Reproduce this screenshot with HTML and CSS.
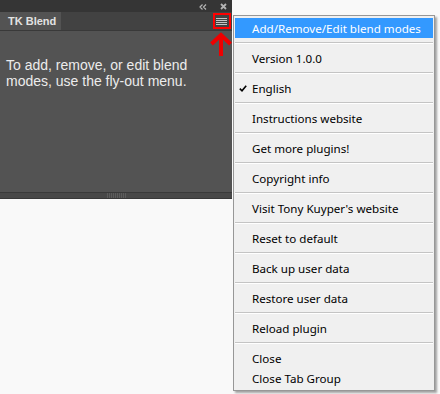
FILE: index.html
```html
<!DOCTYPE html>
<html lang="en">
  <head>
    <meta charset="UTF-8" />
    <title>TK Blend</title>
    <link rel="stylesheet" href="styles.css">
  </head>
  <body>
    <div class="panel">
      <div class="titlebar">
        <svg class="collapse" width="8" height="6" viewBox="0 0 8 6">
          <path d="M3.5 0.5 L1 3 L3.5 5.5 M7 0.5 L4.5 3 L7 5.5" fill="none" stroke="#b4b4b4" stroke-width="1.2" />
        </svg>
        <svg class="close" width="7" height="7" viewBox="0 0 7 7">
          <path d="M1 1 L6 6 M6 1 L1 6" stroke="#b4b4b4" stroke-width="1.8" />
        </svg>
      </div>

      <div class="tabrow">
        <div class="tab">TK Blend</div>
        <div class="menu-btn">
          <svg width="13" height="11" viewBox="0 0 13 11">
            <path d="M1 2.5 H12 M1 4.5 H12 M1 6.5 H12 M1 8.5 H12" stroke="#c4c4c4" stroke-width="1" />
          </svg>
        </div>
      </div>

      <div class="content">
        <p>To add, remove, or edit blend modes, use the fly-out menu.</p>
      </div>

      <div class="footer">
        <div class="grip"></div>
      </div>
    </div>

    <!-- red pointer drawn over the screenshot -->
    <svg class="pointer" width="24" height="24" viewBox="0 0 24 24">
      <path d="M2.5 12 L12 3 L21.5 12" fill="none" stroke="#ee0000" stroke-width="4" />
      <path d="M12 4 V24" stroke="#ee0000" stroke-width="4" />
    </svg>

    <ul class="flyout">
      <li class="item active">Add/Remove/Edit blend modes</li>
      <li class="sep"></li>
      <li class="item">Version 1.0.0</li>
      <li class="sep"></li>
      <li class="item checked">
        <svg class="check" width="8" height="7" viewBox="0 0 8 7">
          <path d="M0.8 3.6 L3 5.8 L7.2 0.8" fill="none" stroke="#000" stroke-width="1.6" />
        </svg>
        English
      </li>
      <li class="sep"></li>
      <li class="item">Instructions website</li>
      <li class="sep"></li>
      <li class="item">Get more plugins!</li>
      <li class="sep"></li>
      <li class="item">Copyright info</li>
      <li class="sep"></li>
      <li class="item">Visit Tony Kuyper's website</li>
      <li class="sep"></li>
      <li class="item">Reset to default</li>
      <li class="sep"></li>
      <li class="item">Back up user data</li>
      <li class="sep"></li>
      <li class="item">Restore user data</li>
      <li class="sep"></li>
      <li class="item">Reload plugin</li>
      <li class="sep"></li>
      <li class="item">Close</li>
      <li class="item">Close Tab Group</li>
    </ul>
  </body>
</html>
```

FILE: styles.css
```css
body {
  margin: 0;
  background-color: #f9f9f9;
  font-family: "Liberation Sans", Arial, sans-serif;
}
.panel {
  width: 232px;
  background-color: #535353;
}
.titlebar {
  height: 12px;
  background-color: #353535;
  display: flex;
  align-items: center;
  justify-content: flex-end;
  gap: 13px;
  padding-right: 5px;
}
.collapse {
  margin-top: 2px;
}
.close {
  margin-top: 1px;
}
.tabrow {
  height: 18px;
  background-color: #424242;
  border-bottom: 1px solid #393939;
  display: flex;
  align-items: flex-start;
}
.tab {
  height: 18px;
  padding: 0 5px 0 8px;
  background-color: #535353;
  color: #e2e2e2;
  font-size: 11px;
  font-weight: bold;
  line-height: 19px;
  white-space: nowrap;
}
.menu-btn {
  margin-left: auto;
  margin-right: 1px;
  margin-top: 1px;
  width: 14px;
  height: 12px;
  border: 2px solid #ff0000;
  display: flex;
  align-items: center;
}
.content {
  height: 135px;
  padding: 26px 6px 0 6px;
}
.content p {
  margin: 0;
  color: #ececec;
  font-size: 14px;
  line-height: 16px;
}
.footer {
  height: 5px;
  background-color: #484848;
  border-top: 1px solid #3a3a3a;
  border-bottom: 1px solid #383838;
  display: flex;
  justify-content: center;
}
.grip {
  width: 20px;
  height: 5px;
  margin-left: 2px;
  background: repeating-linear-gradient(90deg, #5c5c5c 0 1px, transparent 1px 2px);
}
.pointer {
  position: absolute;
  left: 209px;
  top: 32px;
}
.flyout {
  position: absolute;
  left: 233px;
  top: 15px;
  width: 198px;
  margin: 0;
  padding: 2px 1px;
  list-style: none;
  background-color: #f0f0f0;
  border: 1px solid #979797;
  box-shadow: 2px 2px 2px rgba(0, 0, 0, 0.35);
  font-family: "Segoe UI", "Noto Sans", sans-serif;
  font-size: 11.6px;
  color: #000;
}
.item {
  position: relative;
  height: 20px;
  line-height: 22px;
  padding-left: 17px;
  white-space: nowrap;
}
.item.active {
  background-color: #3399ff;
  color: #fff;
}
.check {
  position: absolute;
  left: 4px;
  top: 7px;
}
.sep {
  margin: 4px 0;
  height: 0;
  border-top: 1px solid #c4c4c4;
  border-bottom: 1px solid #fff;
}
```
